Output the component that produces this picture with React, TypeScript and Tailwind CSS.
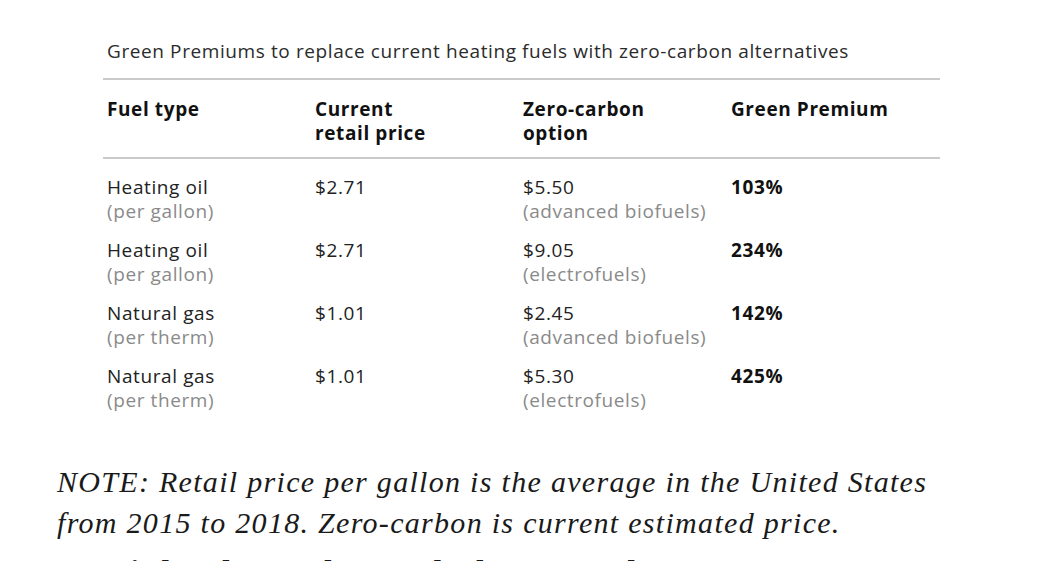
import React from "react"

const rows = [
  { fuel: "Heating oil", unit: "(per gallon)", price: "$2.71", zc: "$5.50", zcType: "(advanced biofuels)", premium: "103%" },
  { fuel: "Heating oil", unit: "(per gallon)", price: "$2.71", zc: "$9.05", zcType: "(electrofuels)", premium: "234%" },
  { fuel: "Natural gas", unit: "(per therm)", price: "$1.01", zc: "$2.45", zcType: "(advanced biofuels)", premium: "142%" },
  { fuel: "Natural gas", unit: "(per therm)", price: "$1.01", zc: "$5.30", zcType: "(electrofuels)", premium: "425%" },
]

export default function App() {
  return (
    <div className="w-[1043px] h-[561px] overflow-hidden bg-white">
      <div className="pl-[103px] pr-[103px] pt-[38px]">
        <div className="font-['Open_Sans',sans-serif] text-[#2b2b2b] tracking-[0.6px]">
          <h3 className="pl-[4px] text-[19px] leading-[26px]">
            Green Premiums to replace current heating fuels with zero-carbon alternatives
          </h3>
          <div className="mt-[14px] h-[2px] bg-[#cacaca]" />
          <div className="grid grid-cols-[208px_208px_208px_1fr] pl-[4px] pt-[17px] pb-[12px] text-[19px] leading-[24px] font-bold text-[#111]">
            <div>Fuel type</div>
            <div>Current<br />retail price</div>
            <div>Zero-carbon<br />option</div>
            <div>Green Premium</div>
          </div>
          <div className="h-[2px] bg-[#cacaca]" />
          <div className="pl-[4px] pt-[16px] flex flex-col gap-[15px]">
            {rows.map((r, i) => (
              <div key={i} className="grid grid-cols-[208px_208px_208px_1fr] text-[19px] leading-[24px]">
                <div>
                  <div className="text-[#222]">{r.fuel}</div>
                  <div className="text-[#8a8a8a]">{r.unit}</div>
                </div>
                <div className="text-[#222]">{r.price}</div>
                <div>
                  <div className="text-[#222]">{r.zc}</div>
                  <div className="text-[#8a8a8a]">{r.zcType}</div>
                </div>
                <div className="font-bold text-[#111]">{r.premium}</div>
              </div>
            ))}
          </div>
        </div>
      </div>
      <div className="pl-[57px] pt-[49px] font-['Liberation_Serif',serif] text-[#1a1a1a]">
        <p className="italic text-[30px] leading-[41px] tracking-[1.3px]">
          NOTE: Retail price per gallon is the average in the United States
          <br />
          from 2015 to 2018. Zero-carbon is current estimated price.
        </p>
        <p className="mt-[10px] pl-[40px] font-bold text-[34px] leading-[40px]">
          It is hard to understand why we need to act now...
        </p>
      </div>
    </div>
  )
}
